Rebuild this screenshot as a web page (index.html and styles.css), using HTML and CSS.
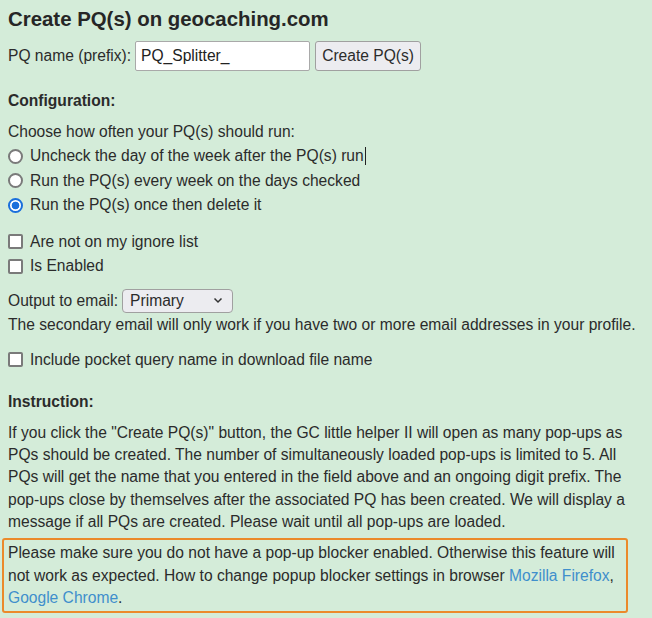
FILE: index.html
```html
<!DOCTYPE html>
<html>
<head>
<meta charset="utf-8">
<link rel="stylesheet" href="styles.css">
</head>
<body>
<div class="page">
  <h2 class="title">Create PQ(s) on geocaching.com</h2>
  <div class="name-row">
    <span>PQ name (prefix):</span>
    <input class="name-input" type="text" value="PQ_Splitter_">
    <button class="btn">Create PQ(s)</button>
  </div>

  <h4 class="section">Configuration:</h4>
  <div class="line">Choose how often your PQ(s) should run:</div>
  <div class="radios">
    <label class="opt"><span class="radio"></span>Uncheck the day of the week after the PQ(s) run<span class="caret"></span></label>
    <label class="opt"><span class="radio"></span>Run the PQ(s) every week on the days checked</label>
    <label class="opt"><span class="radio on"></span>Run the PQ(s) once then delete it</label>
  </div>

  <div class="group">
    <label class="opt"><span class="check"></span>Are not on my ignore list</label>
    <label class="opt"><span class="check"></span>Is Enabled</label>
  </div>

  <div class="group email">
    <div class="email-row">
      <span>Output to email:</span>
      <span class="select">Primary<svg class="chev" width="10" height="7" viewBox="0 0 10 7"><path d="M1.5 1.5 L5 5 L8.5 1.5" fill="none" stroke="#333" stroke-width="1.5"/></svg></span>
    </div>
    <div class="line sub">The secondary email will only work if you have two or more email addresses in your profile.</div>
  </div>

  <label class="opt include"><span class="check"></span>Include pocket query name in download file name</label>

  <h4 class="section instr">Instruction:</h4>
  <p class="para">If you click the "Create PQ(s)" button, the GC little helper II will open as many pop-ups as PQs should be created. The number of simultaneously loaded pop-ups is limited to 5. All PQs will get the name that you entered in the field above and an ongoing digit prefix. The pop-ups close by themselves after the associated PQ has been created. We will display a message if all PQs are created. Please wait until all pop-ups are loaded.</p>
  <p class="warn">Please make sure you do not have a pop-up blocker enabled. Otherwise this feature will not work as expected. How to change popup blocker settings in browser <a href="#">Mozilla Firefox</a>, <a href="#">Google Chrome</a>.</p>
</div>
</body>
</html>
```
FILE: styles.css
```css
html, body {
  margin: 0;
  padding: 0;
  background: #d4ecd9;
}
body {
  font-family: "Liberation Sans", Arial, sans-serif;
  font-size: 15.6px;
  color: #2b2b2b;
}
.page {
  padding: 7px 8px 0 8px;
  width: 628px;
}
.title {
  font-size: 20.4px;
  font-weight: bold;
  margin: 0 0 10px 0;
  line-height: 24px;
  color: #262626;
}
.name-row {
  display: flex;
  align-items: center;
  gap: 4px;
  height: 30px;
}
.name-input {
  box-sizing: border-box;
  width: 175px;
  height: 30px;
  margin: 0;
  border: 1px solid #a9a9a9;
  border-radius: 2px;
  background: #fff;
  font: 15.6px "Liberation Sans", Arial, sans-serif;
  color: #222;
  padding: 2px 5px;
}
.btn {
  box-sizing: border-box;
  height: 30px;
  width: 106px;
  border: 1px solid #a0a0a0;
  border-radius: 3px;
  background: #ececf0;
  font: 15.6px "Liberation Sans", Arial, sans-serif;
  color: #2b2b2b;
  padding: 0 4px;
  margin-left: 1px;
}
.section {
  font-size: 15.6px;
  font-weight: bold;
  margin: 0;
  line-height: 22px;
}
.name-row + .section {
  margin-top: 19px;
}
.section + .line {
  margin-top: 9px;
}
.line {
  line-height: 22px;
}
.radios {
  margin-top: 1px;
}
.opt {
  display: flex;
  align-items: center;
  line-height: 24.5px;
  white-space: nowrap;
}
.radio {
  box-sizing: border-box;
  width: 15px;
  height: 15px;
  border: 2px solid #7a7a7a;
  border-radius: 50%;
  background: #fff;
  margin: 0 7px 0 0;
  flex: none;
}
.radio.on {
  border: 2px solid #1a6fdc;
  background: radial-gradient(circle, #1a6fdc 0 3.5px, #fff 4.2px);
}
.check {
  box-sizing: border-box;
  width: 15px;
  height: 15px;
  border: 2px solid #7a7a7a;
  border-radius: 2px;
  background: #fff;
  margin: 0 7px 0 0;
  flex: none;
}
.caret {
  display: inline-block;
  width: 1px;
  height: 18px;
  background: #222;
  margin-left: 1px;
}
.group {
  margin-top: 12px;
}
.email {
  margin-top: 10px;
}
.email-row {
  display: flex;
  align-items: center;
  gap: 4px;
  height: 24px;
}
.select {
  box-sizing: border-box;
  display: flex;
  align-items: center;
  justify-content: space-between;
  width: 111px;
  height: 24px;
  border: 1px solid #a0a0a0;
  border-radius: 4px;
  background: #ececf0;
  padding: 0 9px 0 7px;
}
.chev {
  display: block;
}
.sub {
  margin-top: 1px;
}
.include {
  margin-top: 12px;
}
.instr {
  margin-top: 19px;
}
.para {
  margin: 9px 0 0 0;
  line-height: 22.2px;
}
.warn {
  margin: 5px 0 0 -6px;
  border: 2.5px solid #eb8a2b;
  border-radius: 3px;
  padding: 2px 4px 1px 4px;
  line-height: 22.6px;
  width: 614px;
}
.warn a {
  color: #3f8fcc;
  text-decoration: none;
}
```
